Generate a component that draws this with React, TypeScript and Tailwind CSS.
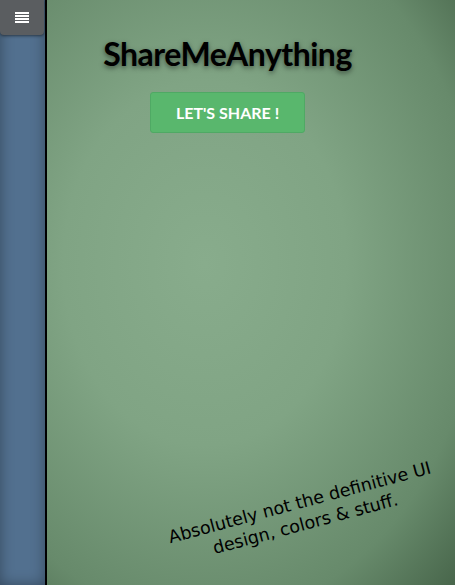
import React from "react";

function MenuToggle() {
  return (
    <button
      type="button"
      aria-label="Menu"
      className="flex h-[35px] w-[44px] items-center justify-center rounded-b-[4px] bg-[#5a5d60] shadow-[0_1px_3px_rgba(0,0,0,0.5)]"
    >
      <svg width="14" height="11" viewBox="0 0 14 11">
        <rect x="0" y="0" width="14" height="2" fill="#fff" />
        <rect x="0" y="3" width="14" height="2" fill="#fff" />
        <rect x="0" y="6" width="14" height="2" fill="#fff" />
        <rect x="0" y="9" width="14" height="2" fill="#fff" />
      </svg>
    </button>
  );
}

export default function App() {
  return (
    <div className="relative h-[585px] w-[455px] overflow-hidden">
      <main className="flex h-full w-full flex-col items-center bg-[radial-gradient(ellipse_at_45%_45%,#88ac8c_0%,#80a484_40%,#678a6b_78%,#48664b_100%)] pt-[38px]">
        <h1
          className="text-[32px] font-bold leading-none tracking-[-0.5px] text-black [text-shadow:0_2px_5px_rgba(0,0,0,0.5)]"
          style={{ fontFamily: "Lato, 'Open Sans', sans-serif" }}
        >
          ShareMeAnything
        </h1>
        <button
          type="button"
          className="mt-[22px] h-[41px] w-[155px] rounded-[3px] border border-[#4fa964] bg-[#59b76d] text-[16px] font-bold text-white"
          style={{ fontFamily: "Lato, 'Open Sans', sans-serif" }}
        >
          LET'S SHARE !
        </button>
        <div
          className="mt-auto mb-[50px] ml-[150px] -rotate-[15deg] text-center text-[17.5px] leading-[22px] text-black"
          style={{ fontFamily: "'DejaVu Sans', sans-serif" }}
        >
          Absolutely not the definitive UI
          <br />
          design, colors &amp; stuff.
        </div>
      </main>
      <aside className="absolute left-0 top-0 h-full w-[47px] border-r-2 border-black bg-[#52708f] shadow-[inset_0_0_14px_rgba(0,0,0,0.35)]">
        <MenuToggle />
      </aside>
    </div>
  );
}
